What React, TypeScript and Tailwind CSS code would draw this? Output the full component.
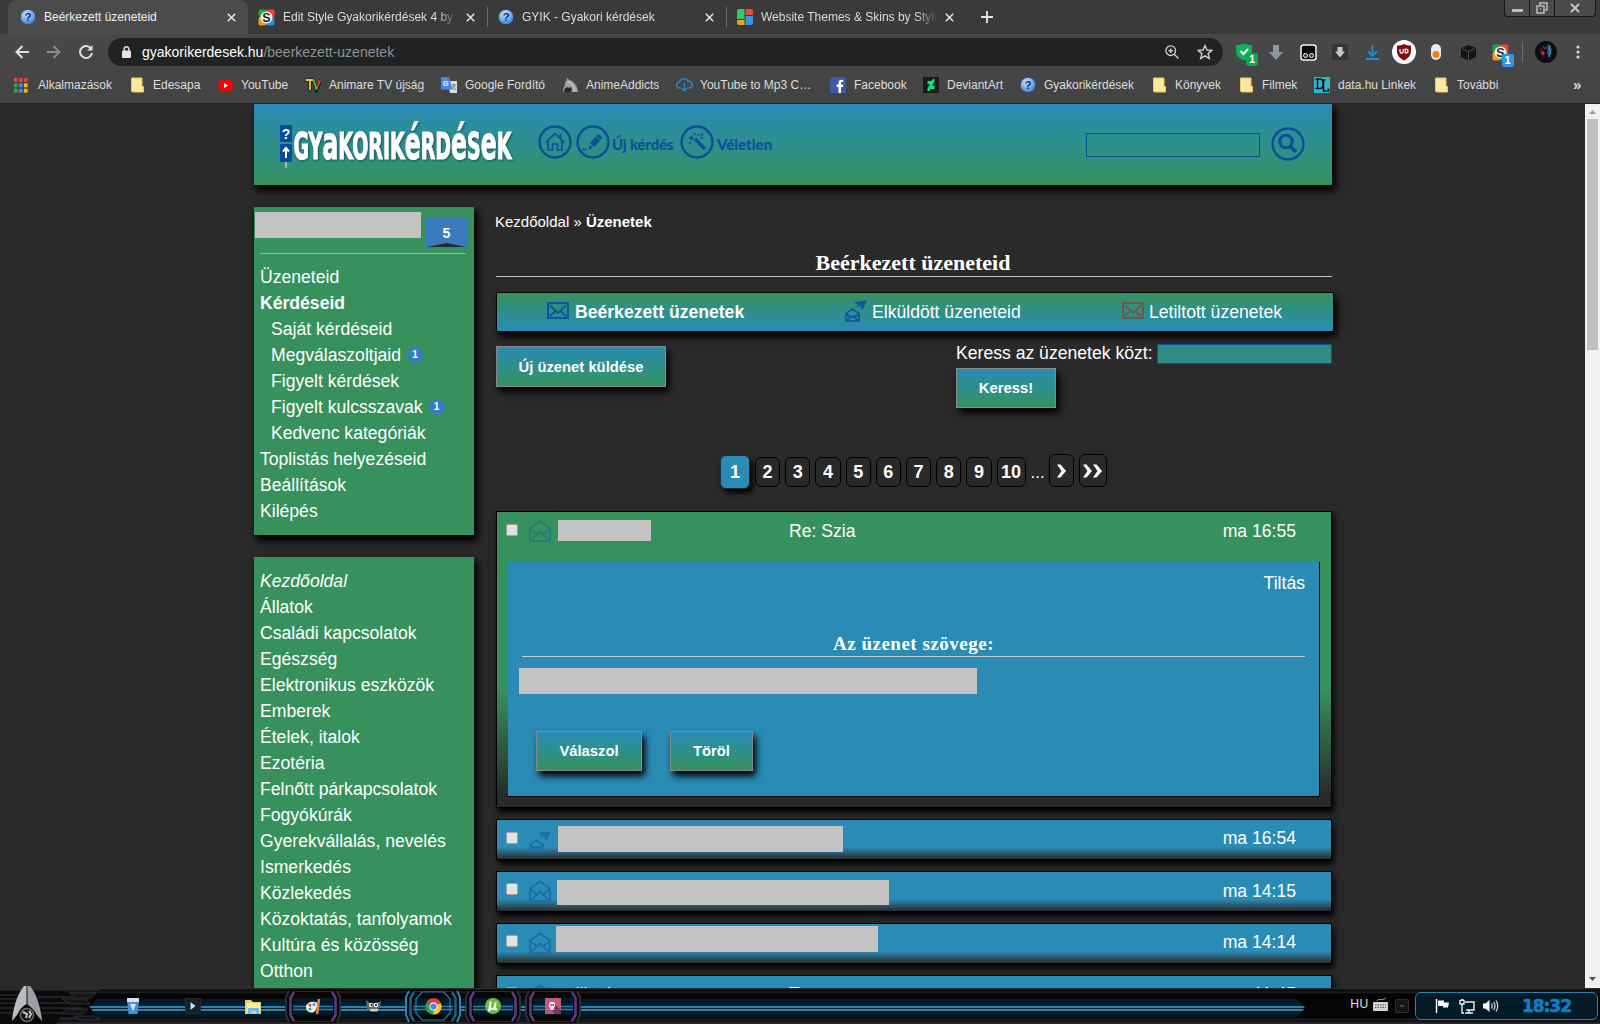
import React from "react";

type P = { children?: React.ReactNode; className?: string };

const HelpIcon = () => (
  <svg width="16" height="16" viewBox="0 0 16 16" className="shrink-0">
    <defs>
      <radialGradient id="helpG" cx="40%" cy="30%" r="75%">
        <stop offset="0" stopColor="#c4e2fb" />
        <stop offset="0.6" stopColor="#6fabec" />
        <stop offset="1" stopColor="#3a78c8" />
      </radialGradient>
    </defs>
    <circle cx="8" cy="8" r="7.3" fill="url(#helpG)" />
    <text x="8" y="12" textAnchor="middle" fontSize="11" fontWeight="bold" fontFamily="Liberation Sans" fill="#0d2a66">?</text>
  </svg>
);

const StylishIcon = () => (
  <svg width="17" height="17" viewBox="0 0 17 17" className="shrink-0">
    <rect x="0.5" y="0.5" width="8" height="8" rx="2" fill="#1fa64a" />
    <rect x="8" y="0.5" width="8.5" height="8" rx="2" fill="#e8472b" />
    <rect x="0.5" y="8" width="8" height="8.5" rx="2" fill="#f39a1d" />
    <rect x="8" y="8" width="8.5" height="8.5" rx="2" fill="#2f8fd4" />
    <circle cx="8.5" cy="8.5" r="6" fill="#e9f0ee" />
    <text x="8.5" y="13" textAnchor="middle" fontSize="12.5" fontWeight="bold" fontFamily="Liberation Sans" fill="#2a2a2a">S</text>
  </svg>
);

const SkinsIcon = () => (
  <svg width="16" height="16" viewBox="0 0 16 16" className="shrink-0">
    <path d="M2 0h5.500v10H0V2a2 2 0 0 1 2-2z" fill="#2ecc71" />
    <path d="M8.500 0H14a2 2 0 0 1 2 2v4H8.500z" fill="#e74c3c" />
    <path d="M0 11h7.500v5H2a2 2 0 0 1-2-2z" fill="#f5a01e" />
    <path d="M8.500 7H16v7a2 2 0 0 1-2 2H8.500z" fill="#3498db" />
  </svg>
);

const Close = () => (
  <svg width="9" height="9" viewBox="0 0 9 9" className="shrink-0" stroke="#e3e3e3" strokeWidth="1.6">
    <path d="M0.8 0.8l7.4 7.4M8.2 0.8L0.8 8.2" />
  </svg>
);

function Tab({ icon, label, active, width }: { icon: React.ReactNode; label: string; active?: boolean; width: string }) {
  return (
    <div className={`${width} flex h-[34px] shrink-0 items-center pr-[12px] ${active ? "rounded-t-lg bg-[#4b4b4b] pl-[12px]" : "pl-[10px]"}`}>
      {icon}
      <span className={`ml-2 mr-2 w-0 flex-1 overflow-hidden whitespace-nowrap text-[12px] ${active ? "text-[#f0f0f0]" : "text-[#dcdcdc] [mask-image:linear-gradient(to_right,#000_88%,transparent)]"}`}>{label}</span>
      <Close />
    </div>
  );
}

const Folder = () => (
  <svg width="13" height="16" viewBox="0 0 13 16" className="shrink-0">
    <path d="M0.5 1h10.5v8.5h1.5V15H1.5L0.5 14z" fill="#ffe9a0" stroke="#eec95a" />
  </svg>
);

const AppsIcon = () => (
  <svg width="14" height="15" viewBox="0 0 14 15" className="shrink-0">
    {["#ea4335", "#ea4335", "#ea4335", "#34a853", "#4285f4", "#fbbc05", "#34a853", "#4285f4", "#fbbc05"].map((c, i) => (
      <rect key={i} x={(i % 3) * 5} y={Math.floor(i / 3) * 5.4} width="3.6" height="3.8" fill={c} />
    ))}
  </svg>
);

const YtIcon = () => (
  <svg width="15" height="11" viewBox="0 0 14 11" className="shrink-0">
    <rect width="14" height="11" rx="3" fill="#f00" />
    <path d="M5.5 3v5l4-2.5z" fill="#fff" />
  </svg>
);

const TvIcon = () => (
  <svg width="15" height="16" viewBox="0 0 15 16" className="shrink-0">
    <path d="M0 3h8M4 3v10.500" stroke="#15240f" strokeWidth="3.600" />
    <path d="M7 3l3.500 10L15 3" stroke="#15240f" strokeWidth="3.600" fill="none" />
    <path d="M0 3h7.500M4 3v10" stroke="#f0c456" strokeWidth="1.800" />
    <path d="M10.500 12.500L14 3" stroke="#e23a2a" strokeWidth="2" fill="none" />
    <path d="M7.500 3l3 9.500" stroke="#5cba4c" strokeWidth="1.800" />
  </svg>
);

const TranslateIcon = () => (
  <svg width="16" height="16" viewBox="0 0 16 16" className="shrink-0">
    <path d="M6 4h10v12H9z" fill="#d8dadd" />
    <path d="M0 0h8l3.5 12.5H1.5A1.5 1.5 0 0 1 0 11z" fill="#4a88f0" />
    <text x="4.6" y="9" textAnchor="middle" fontSize="7.5" fontWeight="bold" fontFamily="Liberation Sans" fill="#fff">G</text>
    <path d="M10.5 8h4M12.5 7v1M14 8c-.5 2-2 3.500-3 4M11.500 9.500c.7 1.200 1.800 2.200 3 3" stroke="#666" fill="none" strokeWidth=".9" />
  </svg>
);

const WolfIcon = () => (
  <svg width="16" height="16" viewBox="0 0 16 16" className="shrink-0">
    <path d="M5 1l2.500 2C12 4 15.500 9 16 15H9c2-2 1.500-4-.5-5L4 12 1 15c-.5-3 1-5 2-6.500C3 6 3.500 4 4.500 3.500z" fill="#a2a2a2" />
    <path d="M2 12.500L5 10l3.500 1.500C9.500 13 9 14 8 15H2.500z" fill="#262626" />
    <path d="M6 5c4 1 6 4 6.500 9" stroke="#dcdcdc" fill="none" />
  </svg>
);

const CloudIcon = () => (
  <svg width="17" height="14" viewBox="0 0 17 14" className="shrink-0" fill="none" stroke="#2287c2" strokeWidth="1.500">
    <path d="M5.500 10H4a3 3 0 0 1-.5-6A4.500 4.500 0 0 1 12 3.500a3.200 3.200 0 0 1 1.500 6.500h-2M8.500 5v8M6 10.500l2.500 2.500 2.500-2.500" />
  </svg>
);

const FbIcon = () => (
  <svg width="16" height="16" viewBox="0 0 16 16" className="shrink-0">
    <rect width="16" height="16" rx="1" fill="#3b5ba5" />
    <path d="M8.500 16V10H6.500V7.500h2V6c0-2.200 1.300-3.300 3.200-3.300h1.600V5h-1.200c-.9 0-1.100.4-1.100 1.100v1.400h2.300L13 10h-2v6z" fill="#fff" />
  </svg>
);

const DaIcon = () => (
  <svg width="16" height="16" viewBox="0 0 16 16" className="shrink-0">
    <rect width="16" height="16" fill="#161c1a" />
    <path d="M11.500 2v2.500L9 8.800h2.500V12H7.600l-1.400 2H4.500v-2.500L7 7.200H4.500V4h3.800l1.400-2z" fill="#05e58a" />
  </svg>
);

const DlIcon = () => (
  <svg width="16" height="16" viewBox="0 0 16 16" className="shrink-0">
    <rect width="16" height="16" fill="#2fb4d0" />
    <path d="M1.500 2h4.500c4 0 4 9.500 0 9.500H1.500M3.500 2v9.500M9.500 3v11h5v-2.500M7.500 3h4" fill="none" stroke="#08161c" strokeWidth="1.500" />
  </svg>
);

const bookmarks: { icon: React.ReactNode; box: string; label: string; width: string }[] = [
  { icon: <AppsIcon />, box: "w-[24px]", label: "Alkalmazások", width: "w-[93px]" },
  { icon: <Folder />, box: "w-[22px]", label: "Edesapa", width: "w-[65px]" },
  { icon: <YtIcon />, box: "w-[23px]", label: "YouTube", width: "w-[65px]" },
  { icon: <TvIcon />, box: "w-[23px]", label: "Animare TV újság", width: "w-[112px]" },
  { icon: <TranslateIcon />, box: "w-[24px]", label: "Google Fordító", width: "w-[97px]" },
  { icon: <WolfIcon />, box: "w-[24px]", label: "AnimeAddicts", width: "w-[90px]" },
  { icon: <CloudIcon />, box: "w-[24px]", label: "YouTube to Mp3 C…", width: "w-[130px]" },
  { icon: <FbIcon />, box: "w-[24px]", label: "Facebook", width: "w-[69px]" },
  { icon: <DaIcon />, box: "w-[24px]", label: "DeviantArt", width: "w-[73px]" },
  { icon: <HelpIcon />, box: "w-[24px]", label: "Gyakorikérdések", width: "w-[109px]" },
  { icon: <Folder />, box: "w-[22px]", label: "Könyvek", width: "w-[65px]" },
  { icon: <Folder />, box: "w-[22px]", label: "Filmek", width: "w-[52px]" },
  { icon: <DlIcon />, box: "w-[24px]", label: "data.hu Linkek", width: "w-[97px]" },
  { icon: <Folder />, box: "w-[22px]", label: "További", width: "w-[116px]" },
];

const extensions: React.ReactNode[] = [
  <div className="relative">
    <svg width="16" height="18" viewBox="0 0 16 18">
      <path d="M8 0.500c3 1.300 5 1.500 8 1.500v6c0 5-4 8-8 9.500C4 16 0 13 0 8V2c3 0 5-.2 8-1.500z" fill="#0db35b" />
      <path d="M4.500 8l3 3 4.500-5" stroke="#fff" strokeWidth="2" fill="none" />
    </svg>
    <span className="absolute left-[10px] top-[10px] h-[13px] w-[12px] rounded-[2px] bg-[#0ea54f] text-center text-[11px] font-bold leading-[13px] text-white">1</span>
  </div>,
  <svg width="16" height="17" viewBox="0 0 16 17"><path d="M5 1h6v7h4l-7 8-7-8h4z" fill="#8b959b" /></svg>,
  <svg width="17" height="17" viewBox="0 0 17 17">
    <rect x="1" y="1" width="15" height="15" rx="2.500" fill="#0b0b0b" stroke="#f5f5f5" strokeWidth="1.500" />
    <circle cx="5.500" cy="11.500" r="2" stroke="#fff" fill="#333" /><circle cx="11.500" cy="11.500" r="2" stroke="#fff" fill="#333" />
  </svg>,
  <svg width="16" height="16" viewBox="0 0 16 16"><rect width="16" height="16" rx="2" fill="#353535" /><path d="M5.500 3h5v4.500H13L8 13.500 3 7.500h2.500z" fill="#c8c8c8" /></svg>,
  <svg width="15" height="16" viewBox="0 0 15 16" stroke="#1d8fd0" strokeWidth="1.900" fill="none"><path d="M7.500 1v10.500M3 7.500l4.500 4.500L12 7.500M1 15h13" /></svg>,
  <svg width="24" height="24" viewBox="0 0 24 24">
    <circle cx="12" cy="12" r="12" fill="#fff" />
    <path d="M12 4c2 1.200 4.500 1.500 7 1.500V11c0 4.500-3 7.500-7 9.500C8 18.500 5 15.500 5 11V5.500C7.500 5.500 10 5.200 12 4z" fill="#800d12" />
    <path d="M8 9v2.500a1.600 1.600 0 0 0 3.200 0V9M13.200 9v4h.8a2 2 0 0 0 0-4z" stroke="#fff" strokeWidth="1.200" fill="none" />
  </svg>,
  <svg width="10" height="16" viewBox="0 0 10 16"><rect width="10" height="16" rx="5" fill="#ececec" /><circle cx="5" cy="10.500" r="3.500" fill="#ef7f1a" /></svg>,
  <svg width="17" height="17" viewBox="0 0 17 17" fill="#151515"><path d="M8.500 1L16 4v9l-7.500 3.500L1 13V4z" /><path d="M2 4.500l6.500 3 6.500-3M8.500 7.500V16" stroke="#4f4f4f" fill="none" /></svg>,
  <div className="relative">
    <StylishIcon />
    <span className="absolute left-[10px] top-[10px] h-[13px] w-[12px] rounded-[2px] bg-[#3396dc] text-center text-[11px] font-bold leading-[13px] text-white">1</span>
  </div>,
];

function BrowserChrome() {
  return (
    <div className="h-[104px] shrink-0 border-b border-[#232323] bg-gradient-to-b from-[#4b4b4b] to-[#434343] font-['Liberation_Sans',sans-serif]">
      <div className="flex h-[34px] items-center bg-[#3a3a3a] pl-2">
        <Tab icon={<HelpIcon />} label="Beérkezett üzeneteid" active width="w-[240px]" />
        <Tab icon={<StylishIcon />} label="Edit Style Gyakorikérdések 4 by A" width="w-[239px]" />
        <div className="h-5 w-px bg-[#6b6b6b]" />
        <Tab icon={<HelpIcon />} label="GYIK - Gyakori kérdések" width="w-[238px]" />
        <div className="h-5 w-px bg-[#6b6b6b]" />
        <Tab icon={<SkinsIcon />} label="Website Themes & Skins by Stylish" width="w-[239px]" />
        <svg className="ml-[15px]" width="12" height="12" viewBox="0 0 12 12" stroke="#e6e6e6" strokeWidth="1.800"><path d="M6 0v12M0 6h12" /></svg>
        <div className="ml-auto mr-[4px] flex h-[17px] w-[92px] self-start rounded-b border border-t-0 border-[#151515] bg-[#4a4a4a]">
          <div className="flex w-[25px] items-end justify-center border-r border-[#151515] pb-1"><div className="h-[3px] w-[11px] bg-[#bdbdbd]" /></div>
          <div className="flex w-[25px] items-center justify-center border-r border-[#151515]">
            <svg width="12" height="12" viewBox="0 0 12 12" fill="none" stroke="#bdbdbd" strokeWidth="1.500"><path d="M4 3V1h7v7H9M1 4h7v7H1zM4 7h1" /></svg>
          </div>
          <div className="flex flex-1 items-center justify-center"><svg width="10" height="10" viewBox="0 0 10 10" stroke="#c4c4c4" strokeWidth="2"><path d="M1 1l8 8M9 1L1 9" /></svg></div>
        </div>
      </div>
      <div className="flex h-[36px] items-center">
        <div className="flex w-[108px] items-center gap-[18px] pl-[15px]">
          <svg width="14" height="14" viewBox="0 0 14 14" fill="none" stroke="#e0e0e0" strokeWidth="2"><path d="M14 7H1.500M7.500 1L1.500 7l6 6" /></svg>
          <svg width="14" height="14" viewBox="0 0 14 14" fill="none" stroke="#8e8e8e" strokeWidth="1.800"><path d="M0 7h12.500M6.500 1l6 6-6 6" /></svg>
          <svg width="14" height="14" viewBox="0 0 14 14" fill="none" stroke="#e0e0e0" strokeWidth="2"><path d="M12 3.500A6 6 0 1 0 13 8" /><path d="M13.500 0v5.500H8z" fill="#e0e0e0" stroke="none" /></svg>
        </div>
        <div className="flex h-[28px] w-[1115px] items-center rounded-full bg-[#202224] pl-[14px] pr-[10px]">
          <svg width="9" height="12" viewBox="0 0 9 12"><path d="M2.200 5V3a2.300 2.300 0 0 1 4.600 0v2" stroke="#e4e4e4" strokeWidth="1.400" fill="none" /><rect y="4.500" width="9" height="7.500" rx="1" fill="#e4e4e4" /></svg>
          <span className="ml-[11px] flex-1 text-[14px] text-[#8f9296]"><span className="text-white">gyakorikerdesek.hu</span>/beerkezett-uzenetek</span>
          <svg width="14" height="14" viewBox="0 0 14 14" fill="none" stroke="#cdcdcd" strokeWidth="1.400"><circle cx="5.700" cy="5.700" r="4.800" /><path d="M9.200 9.200l4.300 4.300M3.500 5.700h4.400M5.700 3.500v4.400" /></svg>
          <svg className="ml-[18px]" width="16" height="16" viewBox="0 0 16 16" fill="none" stroke="#cdcdcd" strokeWidth="1.400"><path d="M8 1.500l2 4.500 4.800.4-3.700 3.200 1.200 4.800L8 11.800l-4.300 2.600 1.200-4.800L1.200 6.400 6 6z" /></svg>
        </div>
        <div className="ml-[5px] flex">
          {extensions.map((e, i) => (
            <div key={i} className="flex w-[32px] items-center justify-center">{e}</div>
          ))}
        </div>
        <div className="ml-[6px] h-5 w-px bg-[#6e6e6e]" />
        <svg className="ml-[12px]" width="22" height="22" viewBox="0 0 22 22">
          <circle cx="11" cy="11" r="11" fill="#0b0e12" />
          <path d="M13 3l4 5-3 9-2-5z" fill="#2c5f80" /><path d="M5 6l5 6-2 4-2-3z" fill="#741a22" /><circle cx="8" cy="12" r="1.500" fill="#e02a2a" /><path d="M15 4l-1 5 2 2-2 5" stroke="#3aa0d8" fill="none" /><path d="M8 5l2 3 2-3" stroke="#356a88" fill="none" />
        </svg>
        <svg className="ml-[19px]" width="4" height="14" viewBox="0 0 4 14" fill="#d8d8d8"><circle cx="2" cy="2" r="1.600" /><circle cx="2" cy="7" r="1.600" /><circle cx="2" cy="12" r="1.600" /></svg>
      </div>
      <div className="flex h-[30px] items-center pl-[14px] text-[12px] text-[#dedede]">
        {bookmarks.map((b) => (
          <div key={b.label} className="flex shrink-0 items-center">
            <div className={b.box}>{b.icon}</div>
            <span className={`${b.width} whitespace-nowrap`}>{b.label}</span>
          </div>
        ))}
        <span className="text-[15px] font-bold">»</span>
      </div>
    </div>
  );
}

const RoundIcon = ({ children }: P) => (
  <svg width="34" height="34" viewBox="0 0 34 34" fill="none" stroke="#0b4f98" strokeWidth="1.700" className="shrink-0">
    <circle cx="17" cy="17" r="15.500" strokeWidth="2.400" />
    {children}
  </svg>
);

const Low = ({ children }: P) => <tspan fontSize="47">{children}</tspan>;

function SiteHeader() {
  return (
    <div className="flex h-[81px] items-start bg-gradient-to-b from-[#2a8bb5] to-[#36915c] shadow-[3px_5px_7px_1px_#000]">
      <svg className="ml-[25px] mt-[18px] shrink-0 overflow-visible" width="238" height="50" viewBox="0 0 238 50">
        <rect x="1" y="3" width="12" height="17" rx="1" fill="#0a4a9c" />
        <rect x="1" y="22" width="12" height="18" rx="1" fill="#0a4a9c" />
        <path d="M7 40v6" stroke="#c6b3bb" strokeWidth="1.800" />
        <path d="M7 36V26M4 29.500L7 26l3 3.500" stroke="#fff" strokeWidth="2" fill="none" />
        <text x="7" y="17" textAnchor="middle" fontFamily="Liberation Sans" fontWeight="bold" fontSize="14" fill="#fff">?</text>
        <g className="[filter:drop-shadow(1.5px_1.5px_1px_rgba(20,70,80,0.8))]">
          <text transform="translate(14.5 37) scale(0.52 1)" textLength="419" lengthAdjust="spacingAndGlyphs" fontFamily="DejaVu Sans" fontWeight="bold" fontSize="38" fill="#fff" stroke="#fff" strokeWidth="1.200">
            GY<Low>a</Low>KORIK<Low>é</Low>RD<Low>é</Low>S<Low>e</Low>K
          </text>
        </g>
      </svg>
      <div className="ml-[21px] mt-[21px] flex items-center font-[Lato,sans-serif] text-[15px] font-black text-[#0b4f98]">
        <RoundIcon><path d="M7.500 17.500L17 8.500l9.500 9M10 15.500V25h4.500v-6h5v6H24v-9.500M22.500 9v4" /></RoundIcon>
        <div className="ml-[4px]"><RoundIcon><path d="M14 18.500l8-9.500 4.500 3.500-8 9.500z" fill="#0b4f98" stroke="none" /><path d="M13.500 20l3.500 2.700-4.500 2z" fill="#0b4f98" stroke="none" /><path d="M6.500 24.500h4" strokeWidth="2" /><path d="M20 11.500l4.500 3.500" stroke="#2f8c9a" strokeWidth="1" /></RoundIcon></div>
        <span className="ml-[2px] w-[68px] whitespace-nowrap pt-[5px] tracking-[-0.200px]">Új kérdés</span>
        <RoundIcon><path d="M15 14l10 10" strokeWidth="3.600" /><path d="M9 13h5M11.500 10.500v5M9 19l2-2M18 9l1 2M22 8v3M14 8l1 2M20 13h3" strokeWidth="1.500" /></RoundIcon>
        <span className="ml-[3px] whitespace-nowrap pt-[5px]">Véletlen</span>
      </div>
      <div className="ml-auto mt-[29px] h-[24px] w-[174px] border border-[#0b4f98]" />
      <div className="ml-[11px] mr-[27px] mt-[23px]">
        <RoundIcon><circle cx="15" cy="14.500" r="6.300" strokeWidth="3" /><path d="M19.500 19.500l5.500 5.500" strokeWidth="3.800" /></RoundIcon>
      </div>
    </div>
  );
}

const Badge = () => (
  <span className="ml-[6px] flex h-4 w-4 items-center justify-center rounded-full bg-[#3a7bbf] text-[10px] font-bold leading-none">1</span>
);

const account: { t: string; cls?: string; badge?: boolean }[] = [
  { t: "Üzeneteid" },
  { t: "Kérdéseid", cls: "font-bold" },
  { t: "Saját kérdéseid", cls: "pl-[11px]" },
  { t: "Megválaszoltjaid", cls: "pl-[11px]", badge: true },
  { t: "Figyelt kérdések", cls: "pl-[11px]" },
  { t: "Figyelt kulcsszavak", cls: "pl-[11px]", badge: true },
  { t: "Kedvenc kategóriák", cls: "pl-[11px]" },
  { t: "Toplistás helyezéseid" },
  { t: "Beállítások" },
  { t: "Kilépés" },
];

const categories = ["Kezdőoldal", "Állatok", "Családi kapcsolatok", "Egészség", "Elektronikus eszközök", "Emberek", "Ételek, italok", "Ezotéria", "Felnőtt párkapcsolatok", "Fogyókúrák", "Gyerekvállalás, nevelés", "Ismerkedés", "Közlekedés", "Közoktatás, tanfolyamok", "Kultúra és közösség", "Otthon"];

function Sidebar() {
  return (
    <div className="w-[220px] shrink-0 text-[17.600px] leading-[26px]">
      <div className="h-[328px] bg-[#36915c] shadow-[3px_5px_7px_1px_#000]">
        <div className="flex h-[46px] items-start">
          <div className="ml-px mt-[5px] h-[26px] w-[166px] bg-[#c3c3c3]" />
          <div className="ml-[5px] mt-[11px] w-[41px]">
            <div className="h-[25px] bg-[#3a7bbf] pt-[3px] text-center text-[14px] font-bold leading-[24px]">5</div>
            <svg className="block" width="41" height="4" viewBox="0 0 41 4"><path d="M0 0h41v4H0z" fill="#3a7bbf" /><path d="M1 4L20.500 0L40 4z" fill="#2a2a2a" /></svg>
          </div>
        </div>
        <div className="ml-[6px] mr-[8px] h-px bg-[#a0b8a8]" />
        <ul className="mt-[10px] pl-[6px]">
          {account.map((a) => (
            <li key={a.t} className={`flex items-center whitespace-nowrap ${a.cls ?? ""}`}>{a.t}{a.badge && <Badge />}</li>
          ))}
        </ul>
      </div>
      <ul className="mt-[22px] h-[500px] bg-[#36915c] pl-[6px] pt-[11px] shadow-[3px_5px_7px_1px_#000]">
        {categories.map((c, i) => (
          <li key={c} className={`whitespace-nowrap ${i === 0 ? "italic" : ""}`}>{c}</li>
        ))}
      </ul>
    </div>
  );
}

const Envelope = ({ color }: { color: string }) => (
  <svg width="22" height="17" viewBox="0 0 22 17" fill="none" stroke={color} strokeWidth="1.800" className="-mt-[2px] shrink-0">
    <rect x="1" y="1" width="20" height="15" strokeWidth="2.200" /><path d="M3 3.500l8 7.500 8-7.500M3 14l5.500-5M19 14l-5.500-5" />
  </svg>
);

const OpenEnvelope = ({ color }: { color: string }) => (
  <svg width="22" height="22" viewBox="0 0 22 22" fill="none" stroke={color} strokeWidth="1.900" className="shrink-0">
    <path d="M1 8.500L11 1.200l10 7.300V21H1zM1 9l7 5.500M21 9l-7 5.500M1 21l10-9.500L21 21" />
  </svg>
);

const SentIcon = ({ color }: { color: string }) => (
  <svg width="22" height="22" viewBox="0 0 22 22" fill="none" stroke={color} strokeWidth="1.600" className="shrink-0">
    <path d="M1 13.500l6.500-4.300 6.500 4.300V21H1zM1 14l4.500 3M14 14l-4.500 3M1 21l6.500-5 6.500 5" />
    <path d="M22 0.500L9 2l4 2.500L10.500 8l4.500-2.500L17.500 10z" fill={color} stroke="none" />
  </svg>
);

const Btn = ({ children, className }: P) => (
  <button className={`${className} flex shrink-0 items-center justify-center border border-[#8a8a8a] bg-gradient-to-b from-[#2a8bb5] to-[#36915c] text-[14.800px] font-bold shadow-[3px_5px_7px_0px_#000]`}>{children}</button>
);

const Check = ({ className = "" }: P) => (
  <span className={`${className} h-3 w-3 shrink-0 rounded-[2px] border border-[#a5a5a5] bg-[#e2e2e2]`} />
);

const Page = ({ children, className = "" }: P) => (
  <span className={`${className} flex h-[30px] items-center justify-center rounded-[6px] border border-black text-[18px] font-bold`}>{children}</span>
);

function Row({ check, iconTop, icon, bar, time, timePad, name, subject }: { check: string; iconTop: string; icon: React.ReactNode; bar?: string; time: string; timePad: string; name?: string; subject?: string }) {
  return (
    <div className="mb-[11px] flex h-[41px] items-start border border-black bg-[linear-gradient(to_bottom,#2a8bb5_70%,#2a2a2a)] pl-[9px] text-[17.600px] leading-[20px] shadow-[2px_4px_6px_0px_#000]">
      <Check className={check} />
      <div className={`ml-[11px] w-[22px] ${iconTop}`}>{icon}</div>
      {bar && <div className={`bg-[#c3c3c3] ${bar}`} />}
      {name && <span className={`ml-[7px] w-[231px] ${timePad}`}>{name}</span>}
      {subject && <span className={timePad}>{subject}</span>}
      <span className={`ml-auto mr-[35px] ${timePad}`}>{time}</span>
    </div>
  );
}

function Messages() {
  return (
    <div className="ml-[22px] w-[836px]">
      <div className="-ml-px h-[30px] text-[15px] leading-[30px]">Kezdőoldal » <b>Üzenetek</b></div>
      <h1 className="mt-[13px] h-[27px] border-b border-[#c8c8c8] pr-[2px] text-center font-['Liberation_Serif',serif] text-[22px] font-bold leading-[26px]">Beérkezett üzeneteid</h1>
      <div className="mt-[15px] flex h-[40px] w-[838px] items-center border border-black bg-gradient-to-b from-[#36915c] to-[#2a8bb5] text-[17.600px] shadow-[3px_5px_7px_0px_#000]">
        <div className="ml-[50px] flex w-[298px] items-center gap-[6px] font-bold"><Envelope color="#0d559e" />Beérkezett üzenetek</div>
        <div className="flex w-[277px] items-center gap-[5px]"><div className="-mt-[2px]"><SentIcon color="#0d559e" /></div>Elküldött üzeneteid</div>
        <div className="flex items-center gap-[5px]"><Envelope color="#6c5a45" />Letiltott üzenetek</div>
      </div>
      <div className="mt-[11px] flex h-[112px] justify-between">
        <Btn className="mt-[3px] h-[41px] w-[170px] pt-px">Új üzenet küldése</Btn>
        <div className="w-[376px]">
          <div className="flex h-[25px] items-start justify-between text-[17.600px] leading-[20px]">
            <span className="whitespace-nowrap">Keress az üzenetek közt:</span>
            <div className="mt-px h-[20px] w-[175px] border border-[#0d4f98] bg-[#2f8d88]" />
          </div>
          <Btn className="h-[40px] w-[100px]">Keress!</Btn>
        </div>
      </div>
      <div className="ml-[224px] flex h-[34px] items-center gap-[5px]">
        <span className="flex h-[34px] w-[30px] items-center justify-center rounded-[6px] border border-[#14303c] bg-[#2a8bb5] text-[18px] font-bold shadow-[3px_4px_5px_#000]">1</span>
        {[2, 3, 4, 5, 6, 7, 8, 9].map((n) => (
          <Page key={n} className="w-[25.200px]">{n}</Page>
        ))}
        <Page className="w-[29px]">10</Page>
        <span className="w-[13px] text-center text-[17px] leading-none">...</span>
        <Page className="mb-[3px] h-[33px] w-[25px]"><svg width="11" height="14" viewBox="0 0 11 14"><path d="M1 0.500h3.500L10 7l-5.500 6.500H1L5.500 7z" fill="#fff" /></svg></Page>
        <Page className="mb-[3px] h-[33px] w-[28px]"><svg className="shrink-0" width="21" height="14" viewBox="0 0 21 14"><path d="M1 0.500h3.500L10 7l-5.500 6.500H1L5.500 7zM11 0.500h3.500L20 7l-5.500 6.500H11L15.500 7z" fill="#fff" /></svg></Page>
      </div>

      <div className="mt-[22px] h-[297px] border border-black bg-[linear-gradient(to_bottom,#36915c_60%,#2a2a2a_96%)] px-[11px] shadow-[2px_4px_6px_0px_#000]">
        <div className="flex h-[50px] items-start text-[17.600px] leading-[20px]">
          <Check className="-ml-[2px] mt-[12px]" />
          <div className="ml-[11px] mt-[8px]"><OpenEnvelope color="#287a78" /></div>
          <div className="ml-[7px] mt-[8px] h-[21px] w-[93px] bg-[#c3c3c3]" />
          <span className="ml-[138px] mt-[9px]">Re: Szia</span>
          <span className="ml-auto mr-[24px] mt-[9px]">ma 16:55</span>
        </div>
        <div className="h-[235px] border-b border-r border-black bg-[#2a8bb5] pr-[14px]">
          <div className="pt-[11px] text-right text-[17.600px] leading-[20px]">Tiltás</div>
          <h2 className="ml-[14px] mt-[39px] h-[25px] border-b border-[#c8c8c8] text-center font-['Liberation_Serif',serif] text-[19px] font-bold leading-[23px] tracking-[0.500px]">Az üzenet szövege:</h2>
          <div className="ml-[11px] mt-[11px] h-[26px] w-[458px] bg-[#c3c3c3]" />
          <div className="ml-[28px] mt-[37px] flex gap-[29px]">
            <Btn className="h-[40px] w-[106px]">Válaszol</Btn>
            <Btn className="-ml-px h-[40px] w-[83px]">Töröl</Btn>
          </div>
        </div>
      </div>

      <div className="mt-[11px]">
        <Row check="mt-[12px]" iconTop="mt-[11px]" icon={<SentIcon color="#1b6ea8" />} bar="ml-[7px] mt-[6px] h-[26px] w-[285px]" time="ma 16:54" timePad="mt-[8px]" />
        <Row check="mt-[11px]" iconTop="mt-[8px]" icon={<OpenEnvelope color="#1b6ea8" />} bar="ml-[6px] mt-[8px] h-[25px] w-[332px]" time="ma 14:15" timePad="mt-[9px]" />
        <Row check="mt-[11px]" iconTop="mt-[8px]" icon={<OpenEnvelope color="#1b6ea8" />} bar="ml-[5px] mt-[2px] h-[26px] w-[322px]" time="ma 14:14" timePad="mt-[8px]" />
        <Row check="mt-[11px]" iconTop="mt-[8px]" icon={<OpenEnvelope color="#1b6ea8" />} name="csillagi" subject="Terem" time="ma 11:45" timePad="mt-[8px]" />
      </div>
    </div>
  );
}

function Scrollbar() {
  return (
    <div className="ml-auto flex w-[15px] shrink-0 flex-col items-center bg-[#f1f1f1]">
      <svg className="mt-[6px] shrink-0" width="7" height="4" viewBox="0 0 7 4"><path d="M0 4l3.500-4L7 4z" fill="#9b9b9b" /></svg>
      <div className="mt-[5px] h-[231px] w-[11px] bg-[#c1c1c1]" />
      <svg className="mb-[7px] mt-auto shrink-0" width="7" height="4" viewBox="0 0 7 4"><path d="M0 0l3.500 4L7 0z" fill="#505050" /></svg>
    </div>
  );
}

function Frame({ color, children, hex }: { color: string; children: React.ReactNode; hex?: boolean }) {
  return (
    <div className="relative flex h-[36px] w-[56px] shrink-0 items-center justify-center">
      <svg className="absolute inset-0" width="56" height="36" viewBox="0 0 56 36">
        <path d="M5 2h46l5 8v17l-5 8H5l-5-8V10z" fill="#070708" />
        <path d="M8 10v17h40V10z" fill="#031a29" />
        <path d="M8 18.500h40M8 21.500h40" stroke="#2584b4" strokeWidth="1.500" />
        <path d="M8 3.500h40M8 33.500h40" stroke="#2c2c30" />
        <path d="M4 3L1 9v18l3 7M52 3l3 6v18l-3 7" stroke={hex ? "#2b86b0" : "#2f2f33"} strokeWidth="2" fill="none" />
        <path d="M9 4L5.500 10v17L9 33M47 4l3.500 6v17L47 33" stroke={color} strokeWidth="2.600" fill="none" />
        {hex && <path d="M17 4h22l6 7v14l-6 7H17l-6-7V11z" stroke="#2b7ea8" strokeWidth="1.200" fill="none" />}
      </svg>
      <div className="relative">{children}</div>
    </div>
  );
}

function Taskbar() {
  return (
    <div className="relative flex h-[36px] shrink-0 items-center bg-[linear-gradient(to_bottom,#353538_0,#0a0a0b_2px,#0a0a0b_3px,#232326_4px,#050506_6px,#050506_30px,#222225_31px,#0c0c0d_33px,#2b2930_35px)]">
      <div className="ml-[88px] mt-[4px] flex h-[19px] w-[1217px] shrink-0 flex-col justify-center gap-px bg-[#031a29] [clip-path:polygon(9px_0,1208px_0,1217px_50%,1208px_100%,9px_100%,0_50%)]">
        <div className="h-[2px] bg-[#2584b4]" />
        <div className="h-[2px] bg-[#2584b4]" />
      </div>
      <svg className="absolute -top-[3px] left-0" width="110" height="39" viewBox="0 0 110 39">
        <path d="M0 5h60l14 5h22l-8 10 8 10H62L56 39H0z" fill="#0a0a0b" />
        <path d="M0 5h100M0 10h18M0 14h18M0 18h16M0 23h14M0 28h12M38 12h40M40 18h46M41 23h42M42 28h36M60 33h40" stroke="#2a2a2d" strokeWidth="1.500" fill="none" />
        <path d="M70 8h26l-6 5H76zM62 14h24l4 5H70zM66 24h22l-5 5H62zM74 31h20l6 4H80z" fill="#151517" stroke="#39393d" strokeWidth=".8" />
        <path d="M24 1h2.500v21l-7 5L12 36C13 22 18 8 24 1z" fill="#b9bcc2" />
        <path d="M30 1h-2.500v21l7 5L42 36C41 22 36 8 30 1z" fill="#9b9ea5" />
        <path d="M16 36c1-8 4-13 10.500-17C33 23 37 28 38 36z" fill="#0b0b0b" />
        <circle cx="27" cy="30" r="6.500" fill="#161617" stroke="#6a6a6e" strokeWidth="1.500" />
        <path d="M23 27l4 2-1 4M29 26l2 3-2 4" stroke="#c2c6cb" strokeWidth="2" fill="none" />
      </svg>
      <div className="absolute left-[125px] top-0 flex h-[36px] items-center">
        <svg width="16" height="18" viewBox="0 0 16 18"><path d="M2 3h12l-1.500 14h-9z" fill="#4a8fd8" /><path d="M2 1h12v4H2z" fill="#d8e6f2" /><path d="M5 7l3 7 3-7z" fill="#d4e8fa" /></svg>
        <svg className="ml-[44px]" width="16" height="16" viewBox="0 0 16 16"><rect width="16" height="16" rx="2" fill="#1b1e22" stroke="#33373c" /><path d="M5.500 4v8l5-4z" fill="#bfe0f5" /></svg>
        <svg className="ml-[44px]" width="17" height="17" viewBox="0 0 17 17"><path d="M0 2h6l2 2h8v12H0z" fill="#f0cf68" /><path d="M2 5h13v8H2z" fill="#fbe9a6" /><path d="M3 10h11v6h-3v-3H6v3H3z" fill="#6cb8e8" /></svg>
        <div className="ml-[23px]"><Frame color="#5d3a86"><svg width="17" height="17" viewBox="0 0 17 17"><path d="M1 9c0-4 5-6 9-5 5 1 5 5 2 6-2 .5-1 3-3 4-3 1.500-8 0-8-5z" fill="#e6eef4" /><circle cx="5" cy="7" r="1.500" fill="#e04646" /><circle cx="9" cy="6.500" r="1.500" fill="#3c9be0" /><circle cx="5" cy="11" r="1.600" fill="#49ad46" /><path d="M14 1l-2 15" stroke="#e5862c" strokeWidth="2.600" /></svg></Frame></div>
        <svg className="ml-[24px]" width="17" height="15" viewBox="0 0 17 15"><path d="M1 1l4 3h7l4-2-1 6-3 5H6L2 10z" fill="#6c6961" /><circle cx="6" cy="6" r="2" fill="#fff" /><circle cx="11" cy="6" r="2.200" fill="#fff" /><circle cx="6.500" cy="6" r="1" /><circle cx="11" cy="6" r="1" /><path d="M5 11h8" stroke="#eee" strokeWidth="1.500" /></svg>
        <div className="ml-[23px]"><Frame hex color="#1d5f80"><svg width="17" height="17" viewBox="0 0 17 17"><path d="M8.500 8.500L1.500 4.500A8 8 0 0 1 15.800 5z" fill="#e04335" /><path d="M8.500 8.500L15.800 5A8 8 0 0 1 8 16.500z" fill="#f8c81c" /><path d="M8.500 8.500L8 16.500A8 8 0 0 1 1.500 4.500z" fill="#2fa350" /><circle cx="8.500" cy="8.500" r="3.900" fill="#fff" /><circle cx="8.500" cy="8.500" r="3.100" fill="#4285f4" /></svg></Frame></div>
        <div className="ml-[4px]"><Frame color="#5d3a86"><svg width="16" height="16" viewBox="0 0 16 16"><circle cx="8" cy="8" r="8" fill="#72b843" /><path d="M5 14V4M5 9c0 2.500 4.500 2.500 5 0V4M10 9c0 1.500 1 2 2.500 1.500" stroke="#fff" strokeWidth="2" fill="none" transform="rotate(10 8 8)" /></svg></Frame></div>
        <div className="ml-[4px]"><Frame color="#5d3a86"><svg width="16" height="16" viewBox="0 0 16 16"><rect width="16" height="16" fill="#c4567c" /><path d="M9 5l7 7v4H10L5 11z" fill="#7d3550" /><circle cx="7" cy="7" r="3.200" fill="#f0e6ea" /><path d="M5 9h4v3H5z" fill="#e8dce2" /><circle cx="6" cy="7" r=".8" /><circle cx="8.200" cy="7" r=".8" /></svg></Frame></div>
      </div>
      <span className="-mt-[4px] ml-[45px] font-['Noto_Sans',sans-serif] text-[12.500px] text-[#e4e4e4]">HU</span>
      <svg className="-mt-1 ml-[4px] shrink-0" width="17" height="15" viewBox="0 0 17 15"><rect x="1" y="5" width="15" height="9" rx="1" fill="#d3d3d3" /><path d="M3 8h11M3 10.500h11" stroke="#555" strokeDasharray="1.500 1" /><path d="M5 4c1-3 5 0 9-3" stroke="#aaa" fill="none" /></svg>
      <svg className="ml-[6px] shrink-0" width="14" height="14" viewBox="0 0 14 14"><rect x=".5" y=".5" width="13" height="13" rx="1" fill="#161618" stroke="#303034" /><path d="M4 8l3-3 3 3z" fill="#44444a" /></svg>
      <div className="ml-auto mr-[2px] flex h-[28px] w-[183px] shrink-0 items-center rounded-md border border-[#2a82ad] bg-[#031a29] pl-[19px] pr-[26px]">
        <svg width="16" height="14" viewBox="0 0 16 14"><path d="M1.500 0v14" stroke="#fff" strokeWidth="1.400" /><path d="M3 1.500h6v2h5l-1 5H8v-1.500H3z" fill="#fff" /></svg>
        <svg className="ml-[8px] shrink-0" width="16" height="15" viewBox="0 0 16 15" fill="none" stroke="#f0f0f0" strokeWidth="1.400"><path d="M6 3h9v8H7M10 11v3M6 14h8M1 1v4h4V1M3 5v9h2M2.500 0v2M4 0v2" /></svg>
        <svg className="ml-[8px] shrink-0" width="16" height="14" viewBox="0 0 16 14"><path d="M0 4.500h2.500L6.500 1v12l-4-3.500H0z" fill="#fff" /><path d="M8.500 4.500q1.500 2.500 0 5M10.700 3q2.500 4 0 8M13 1.500q3.500 5.500 0 11" stroke="#ddd" strokeWidth="1.200" fill="none" /></svg>
        <span className="ml-auto pt-[2px] font-['DejaVu_Sans',sans-serif] text-[17px] font-bold tracking-[-1px] text-[#0c80c2] [-webkit-text-stroke:0.600px_#0c80c2]">18:32</span>
      </div>
    </div>
  );
}

export default function App() {
  return (
    <div className="flex h-[1024px] w-[1600px] flex-col overflow-hidden bg-[#2a2a2a] font-['Liberation_Sans',sans-serif] text-white">
      <BrowserChrome />
      <div className="flex h-[884px] shrink-0 overflow-hidden">
        <div className="ml-[254px] w-[1078px] shrink-0">
          <SiteHeader />
          <div className="mt-[22px] flex items-start">
            <Sidebar />
            <Messages />
          </div>
        </div>
        <Scrollbar />
      </div>
      <Taskbar />
    </div>
  );
}
